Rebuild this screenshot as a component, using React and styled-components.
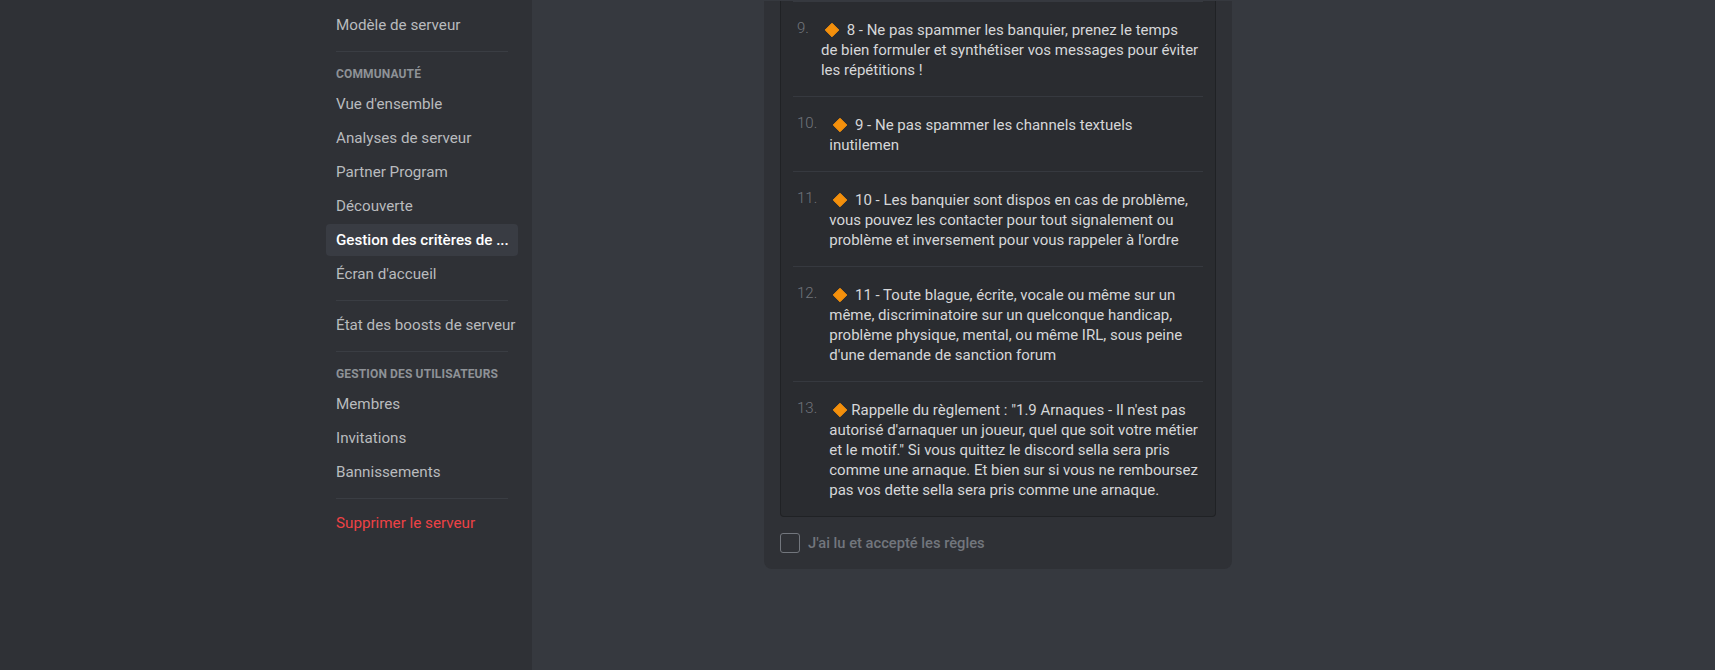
import React from 'react'
import styled, { createGlobalStyle } from 'styled-components'

const font = `Roboto, 'Noto Sans', sans-serif`

const Global = createGlobalStyle`
  html, body {
    margin: 0;
    padding: 0;
    height: 100%;
    overflow: hidden;
    background: #36393f;
    font-family: ${font};
  }
`

const Page = styled.div`
  display: flex;
  height: 100vh;
  overflow: hidden;
`

const Sidebar = styled.nav`
  width: 532px;
  flex: none;
  box-sizing: border-box;
  background: #2f3136;
  padding: 9px 14px 0 0;
  display: flex;
  justify-content: flex-end;
`

const SideColumn = styled.div`
  width: 192px;
  display: flex;
  flex-direction: column;
`

const SideItem = styled.div`
  height: 32px;
  line-height: 32px;
  margin-bottom: 2px;
  padding: 0 10px;
  border-radius: 4px;
  font-size: 15.2px;
  font-weight: ${(p) => (p.$active ? 500 : 400)};
  white-space: nowrap;
  color: ${(p) => (p.$danger ? '#ed4245' : p.$active ? '#fff' : '#b9bbbe')};
  background: ${(p) => (p.$active ? '#393c43' : 'transparent')};
`

const SideHeading = styled.div`
  padding: 6px 10px;
  font-size: 12px;
  letter-spacing: 0.14px;
  line-height: 16px;
  font-weight: 700;
  color: #8e9297;
  text-transform: uppercase;
`

const SideDivider = styled.div`
  height: 1px;
  margin: 8px 10px;
  background: #3a3d43;
`

const Main = styled.main`
  flex: 1;
  padding: 1px 0 0 232px;
`

const Card = styled.section`
  width: 468px;
  box-sizing: border-box;
  padding: 0 16px 16px;
  background: #2f3136;
  border-radius: 0 0 8px 8px;
`

const RulesBox = styled.ol`
  list-style: none;
  margin: 0;
  padding: 0 12px 0;
  background: #2a2c30;
  border: 1px solid #202225;
  border-top: none;
  border-radius: 0 0 4px 4px;
`

const Rule = styled.li`
  display: flex;
  gap: 12px;
  padding: 18px 4px 16px;
  border-top: 1px solid #36393f;
`

const RuleNumber = styled.span`
  flex: none;
  font-size: 15px;
  line-height: 16px;
  font-weight: 300;
  color: #72767d;
`

const RuleText = styled.div`
  font-size: 15px;
  line-height: 20px;
  white-space: nowrap;
  color: #d6d7d9;
`

const Line = styled.div`
  height: 20px;
`

const Diamond = styled.svg`
  width: 22px;
  height: 22px;
  margin: -4px 0;
  vertical-align: -2px;
`

const Emoji = () => (
  <Diamond viewBox="0 0 22 22">
    <path d="M11 4.2 17.8 11 11 17.8 4.2 11Z" fill="#f4900c" stroke="#f4900c" strokeWidth="1" strokeLinejoin="round" />
  </Diamond>
)

const AcceptRow = styled.label`
  display: flex;
  align-items: center;
  gap: 8px;
  margin-top: 16px;
  font-size: 14.7px;
  line-height: 20px;
  font-weight: 500;
  color: #72767d;
`

const Box = styled.span`
  width: 20px;
  height: 20px;
  box-sizing: border-box;
  border: 1px solid #72767d;
  border-radius: 3px;
`

const rules = [
  { n: '9.', lines: [' 8 - Ne pas spammer les banquier, prenez le temps', 'de bien formuler et synthétiser vos messages pour éviter', 'les répétitions !'] },
  { n: '10.', lines: [' 9 - Ne pas spammer les channels textuels', 'inutilemen'] },
  { n: '11.', lines: [' 10 - Les banquier sont dispos en cas de problème,', 'vous pouvez les contacter pour tout signalement ou', 'problème et inversement pour vous rappeler à l\'ordre'] },
  { n: '12.', lines: [' 11 - Toute blague, écrite, vocale ou même sur un', 'même, discriminatoire sur un quelconque handicap,', 'problème physique, mental, ou même IRL, sous peine', 'd\'une demande de sanction forum'] },
  { n: '13.', lines: ['Rappelle du règlement : "1.9 Arnaques - Il n\'est pas', 'autorisé d\'arnaquer un joueur, quel que soit votre métier', 'et le motif." Si vous quittez le discord sella sera pris', 'comme une arnaque. Et bien sur si vous ne remboursez', 'pas vos dette sella sera pris comme une arnaque.'] },
]

export default function App() {
  return (
    <Page>
      <Global />
      <Sidebar>
        <SideColumn>
          <SideItem>Modèle de serveur</SideItem>
          <SideDivider />
          <SideHeading>Communauté</SideHeading>
          <SideItem>Vue d'ensemble</SideItem>
          <SideItem>Analyses de serveur</SideItem>
          <SideItem>Partner Program</SideItem>
          <SideItem>Découverte</SideItem>
          <SideItem $active>Gestion des critères de ...</SideItem>
          <SideItem>Écran d'accueil</SideItem>
          <SideDivider />
          <SideItem>État des boosts de serveur</SideItem>
          <SideDivider />
          <SideHeading>Gestion des utilisateurs</SideHeading>
          <SideItem>Membres</SideItem>
          <SideItem>Invitations</SideItem>
          <SideItem>Bannissements</SideItem>
          <SideDivider />
          <SideItem $danger>Supprimer le serveur</SideItem>
        </SideColumn>
      </Sidebar>
      <Main>
        <Card>
          <RulesBox>
            {rules.map((r) => (
              <Rule key={r.n}>
                <RuleNumber>{r.n}</RuleNumber>
                <RuleText>
                  {r.lines.map((l, i) => (
                    <Line key={i}>
                      {i === 0 && <Emoji />}
                      {l}
                    </Line>
                  ))}
                </RuleText>
              </Rule>
            ))}
          </RulesBox>
          <AcceptRow>
            <Box />
            J'ai lu et accepté les règles
          </AcceptRow>
        </Card>
      </Main>
    </Page>
  )
}
